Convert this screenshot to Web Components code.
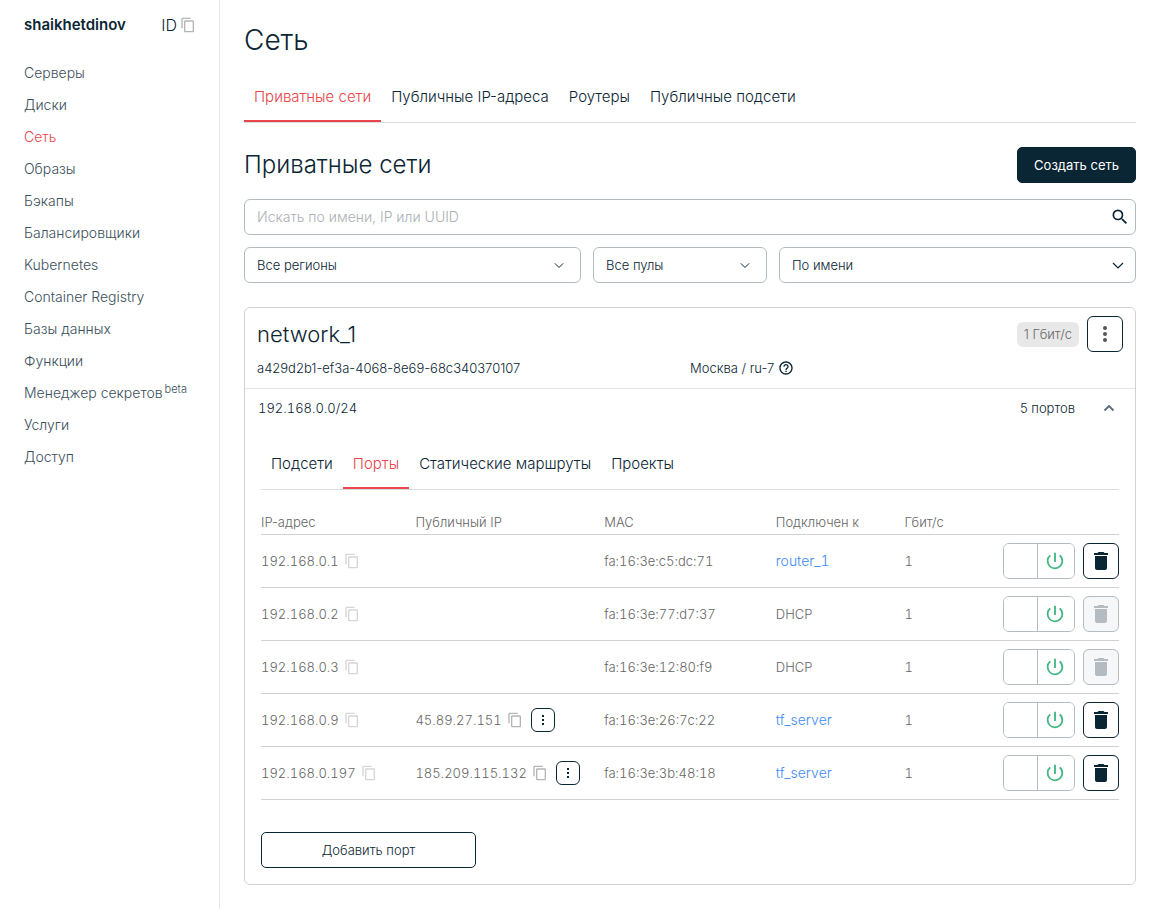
<!DOCTYPE html>
<html lang="ru">
<head>
<meta charset="utf-8">
<meta name="viewport" content="width=device-width, initial-scale=1">
<title>Сеть</title>
<style>
  :root {
    --ink: #0a2533;
    --text: #3b4f5b;
    --muted: #666;
    --red: #e8454a;
    --line: #d0d1d3;
    --field: #b4bcc2;
    --link: #3f8cf8;
    --green: #43b580;
  }
  body {
    margin: 0;
    background: #fff;
    color: var(--ink);
    font: 300 14px/20px Inter, "Liberation Sans", sans-serif;
  }
</style>
</head>
<body>
<app-shell>
  <side-nav slot="side" user="shaikhetdinov">
    <nav-link>Серверы</nav-link>
    <nav-link>Диски</nav-link>
    <nav-link active>Сеть</nav-link>
    <nav-link>Образы</nav-link>
    <nav-link>Бэкапы</nav-link>
    <nav-link>Балансировщики</nav-link>
    <nav-link>Kubernetes</nav-link>
    <nav-link>Container Registry</nav-link>
    <nav-link>Базы данных</nav-link>
    <nav-link>Функции</nav-link>
    <nav-link tag="beta">Менеджер секретов</nav-link>
    <nav-link>Услуги</nav-link>
    <nav-link>Доступ</nav-link>
  </side-nav>
  <network-page>
    <tab-bar slot="tabs" items="Приватные сети|Публичные IP-адреса|Роутеры|Публичные подсети" current="0"></tab-bar>
    <network-filters slot="filters"></network-filters>
    <network-card name="network_1" uuid="a429d2b1-ef3a-4068-8e69-68c340370107" region="Москва / ru-7" speed="1 Гбит/с" cidr="192.168.0.0/24" ports="5 портов">
      <tab-bar items="Подсети|Порты|Статические маршруты|Проекты" current="1"></tab-bar>
      <port-table></port-table>
      <ui-button kind="outline wide">Добавить порт</ui-button>
    </network-card>
  </network-page>
</app-shell>

<script>
const PATHS = {
  copy: '<path d="M16 1H4c-1.1 0-2 .9-2 2v14h2V3h12V1zm3 4H8c-1.1 0-2 .9-2 2v14c0 1.1.9 2 2 2h11c1.1 0 2-.9 2-2V7c0-1.1-.9-2-2-2zm0 16H8V7h11v14z"/>',
  search: '<path d="M15.5 14h-.79l-.28-.27A6.471 6.471 0 0 0 16 9.5 6.5 6.5 0 1 0 9.5 16c1.61 0 3.09-.59 4.23-1.57l.27.28v.79l5 4.99L20.49 19l-4.99-5zm-6 0C7.01 14 5 11.99 5 9.5S7.01 5 9.5 5 14 7.01 14 9.5 11.99 14 9.5 14z"/>',
  power: '<path d="M13 3h-2v10h2V3zm4.83 2.17l-1.42 1.42A6.92 6.92 0 0 1 19 12c0 3.87-3.13 7-7 7A6.995 6.995 0 0 1 7.58 6.58L6.17 5.17A8.932 8.932 0 0 0 3 12a9 9 0 0 0 18 0c0-2.74-1.23-5.18-3.17-6.83z"/>',
  trash: '<path d="M6 19c0 1.1.9 2 2 2h8c1.1 0 2-.9 2-2V7H6v12zM19 4h-3.5l-1-1h-5l-1 1H5v2h14V4z"/>',
  help: '<path d="M11 18h2v-2h-2v2zm1-16C6.48 2 2 6.48 2 12s4.48 10 10 10 10-4.48 10-10S17.52 2 12 2zm0 18c-4.41 0-8-3.59-8-8s3.59-8 8-8 8 3.59 8 8-3.59 8-8 8zm0-14c-2.21 0-4 1.79-4 4h2c0-1.1.9-2 2-2s2 .9 2 2c0 2-3 1.75-3 5h2c0-2.25 3-2.5 3-5 0-2.21-1.79-4-4-4z"/>',
  dots: '<circle cx="12" cy="6" r="2"/><circle cx="12" cy="12" r="2"/><circle cx="12" cy="18" r="2"/>',
  minidots: '<path d="M10.5 4.5h3v3h-3zM10.5 10.5h3v3h-3zM10.5 16.5h3v3h-3z"/>',
  down: '<path d="M7 10l5 5 5-5" fill="none" stroke="currentColor" stroke-width="1.2"/>',
  up: '<path d="M7.5 14.5L12 10l4.5 4.5" fill="none" stroke="currentColor" stroke-width="1.8"/>'
};

class BaseElement extends HTMLElement {
  connectedCallback() {
    if (this.shadowRoot) return;
    this.attachShadow({ mode: 'open' }).innerHTML =
      `<style>*{box-sizing:border-box}${this.css()}</style>${this.html()}`;
  }
  attr(name) { return this.getAttribute(name) || ''; }
  css() { return ''; }
  html() { return '<slot></slot>'; }
}
const define = (name, cls) => customElements.define(name, cls);

define('ui-icon', class extends BaseElement {
  css() {
    const size = this.attr('size') || 24;
    return `:host{display:inline-flex;flex:none;width:${size}px;height:${size}px}
      svg{width:100%;height:100%;fill:currentColor}`;
  }
  html() { return `<svg viewBox="0 0 24 24" aria-hidden="true">${PATHS[this.attr('name')]}</svg>`; }
});

define('copy-button', class extends BaseElement {
  css() {
    return `:host{display:inline-flex;flex:none;color:#b5b5b5}
      :host([faint]){color:#d6d6d6}
      button{display:flex;padding:0;border:0;background:none;color:inherit;cursor:pointer}`;
  }
  html() { return '<button type="button" aria-label="Скопировать"><ui-icon name="copy" size="16"></ui-icon></button>'; }
});

define('ui-button', class extends BaseElement {
  css() {
    return `:host{display:inline-block}
      button{font:400 13px/20px Inter,"Liberation Sans",sans-serif;height:36px;padding:0 16px;border:1px solid var(--ink);
        border-radius:5px;background:var(--ink);color:#fff;cursor:pointer;white-space:nowrap}
      .outline{background:#fff;color:var(--ink);font-weight:300}
      .wide{width:215px}`;
  }
  html() { return `<button type="button" class="${this.attr('kind')}"><slot></slot></button>`; }
});

define('icon-button', class extends BaseElement {
  css() {
    return `:host{display:inline-flex;flex:none}
      button{display:flex;align-items:center;justify-content:center;width:36px;height:36px;padding:0;
        border:1px solid var(--ink);border-radius:6px;background:#fff;color:var(--ink);cursor:pointer}
      :host([small]) button{width:24px;height:24px}
      :host([soft]) button{color:#555}
      button:disabled{border-color:var(--field);background:#f5f7f9;color:var(--field);cursor:default}`;
  }
  html() {
    const off = this.hasAttribute('disabled') ? 'disabled' : '';
    return `<button type="button" aria-label="${this.attr('label')}" ${off}>
      <ui-icon name="${this.attr('icon')}" size="${this.attr('size') || 24}"></ui-icon></button>`;
  }
});

define('power-switch', class extends BaseElement {
  css() {
    return `:host{display:inline-flex;flex:none;width:72px;height:36px;border:1px solid var(--field);border-radius:6px;overflow:hidden}
      button{display:flex;align-items:center;justify-content:center;padding:0;border:0;background:#fff;color:var(--green);cursor:pointer}
      .off{width:33px}
      .on{flex:1;padding-right:2px;border-left:1px solid var(--field)}`;
  }
  html() {
    return `<button type="button" class="off" aria-label="Выключить"></button>
      <button type="button" class="on" aria-label="Включить"><ui-icon name="power" size="22"></ui-icon></button>`;
  }
});

define('app-shell', class extends BaseElement {
  css() {
    return `:host{display:flex;align-items:stretch;min-height:100vh}
      aside{flex:none;width:220px;padding:16px 23px 16px 24px;border-right:1px solid #e5e7e9}
      main{flex:1;min-width:0;padding:24px 37px 24px 24px}`;
  }
  html() { return '<aside><slot name="side"></slot></aside><main><slot></slot></main>'; }
});

define('side-nav', class extends BaseElement {
  css() {
    return `:host{display:block}
      header{display:flex;align-items:center;justify-content:space-between;height:18px;margin-bottom:23px}
      b{font-size:15px;font-weight:600}
      .id{display:flex;align-items:center;gap:3px;font-size:16px}`;
  }
  html() {
    return `<header><b>${this.attr('user')}</b><span class="id">ID<copy-button></copy-button></span></header>
      <nav><slot></slot></nav>`;
  }
});

define('nav-link', class extends BaseElement {
  css() {
    return `:host{display:block;color:var(--text)}
      :host([active]){color:var(--red)}
      a{display:flex;align-items:center;gap:2px;height:32px;color:inherit;text-decoration:none;white-space:nowrap}
      small{font-size:11px;padding-bottom:8px}`;
  }
  html() {
    const tag = this.attr('tag');
    return `<a href="#"><slot></slot>${tag ? `<small>${tag}</small>` : ''}</a>`;
  }
});

define('tab-bar', class extends BaseElement {
  css() {
    return `:host{display:block}
      nav{display:flex;border-bottom:1px solid #d9dce0}
      a{padding:12px 10px;border-bottom:2px solid transparent;font-size:15px;line-height:22px;
        color:var(--ink);text-decoration:none;white-space:nowrap}
      a[aria-current]{color:var(--red);border-color:var(--red)}`;
  }
  html() {
    const current = Number(this.attr('current'));
    return `<nav>${this.attr('items').split('|').map((t, i) =>
      `<a href="#"${i === current ? ' aria-current="page"' : ''}>${t}</a>`).join('')}</nav>`;
  }
});

define('network-page', class extends BaseElement {
  css() {
    return `:host{display:block}
      h1{margin:0 0 18px;font-size:28px;line-height:32px;font-weight:300}
      .head{display:flex;align-items:center;justify-content:space-between;margin:24px 0 16px}
      h2{margin:0;font-size:24px;line-height:32px;font-weight:300}
      .cards{margin-top:24px}`;
  }
  html() {
    return `<h1>Сеть</h1><slot name="tabs"></slot>
      <div class="head"><h2>Приватные сети</h2><ui-button>Создать сеть</ui-button></div>
      <slot name="filters"></slot><div class="cards"><slot></slot></div>`;
  }
});

define('filter-select', class extends BaseElement {
  css() {
    return `:host{display:grid;align-items:center;min-width:0}
      select,ui-icon{grid-area:1/1}
      select{appearance:none;width:100%;height:36px;padding:0 40px 0 12px;border:1px solid var(--field);border-radius:6px;
        background:#fff;color:var(--ink);font:300 13px/20px Inter,"Liberation Sans",sans-serif}
      ui-icon{justify-self:end;margin-right:12px;pointer-events:none;color:var(--ink)}
      :host([large]) ui-icon{margin-right:6px}`;
  }
  html() {
    const size = this.hasAttribute('large') ? 24 : 20;
    return `<select aria-label="${this.attr('label')}"><option>${this.attr('value')}</option></select>
      <ui-icon name="down" size="${size}"></ui-icon>`;
  }
});

define('network-filters', class extends BaseElement {
  css() {
    return `:host{display:grid;gap:12px}
      .search{display:flex;align-items:center;height:36px;padding:0 5px 0 12px;border:1px solid var(--field);border-radius:6px}
      input{flex:1;min-width:0;padding:0;border:0;outline:0;background:none;color:var(--ink);
        font:300 14px/20px Inter,"Liberation Sans",sans-serif}
      input::placeholder{color:#a9b0b5;opacity:1}
      .row{display:grid;grid-template-columns:337fr 174fr 357fr;gap:12px}`;
  }
  html() {
    return `<label class="search"><input type="text" aria-label="Поиск" placeholder="Искать по имени, IP или UUID"><ui-icon name="search" size="20"></ui-icon></label>
      <div class="row">
        <filter-select label="Регион" value="Все регионы"></filter-select>
        <filter-select label="Пул" value="Все пулы"></filter-select>
        <filter-select label="Сортировка" value="По имени" large></filter-select>
      </div>`;
  }
});

define('network-card', class extends BaseElement {
  css() {
    return `:host{display:block;border:1px solid var(--line);border-radius:6px;font-size:13px}
      header{padding:8px 12px;border-bottom:1px solid #e3e5e6}
      .top{display:flex;align-items:center;gap:8px;margin-bottom:4px}
      h3{flex:1;margin:0;font-size:22px;line-height:28px;font-weight:300}
      .speed{padding:2px 7px 3px;border-radius:6px;background:#e8e8e8;color:#666}
      .meta{display:grid;grid-template-columns:1fr 1fr;line-height:24px}
      .region{display:flex;align-items:center;gap:4px}
      .subnet{display:flex;align-items:center;height:38px;padding:0 14px 0 13px}
      .subnet span{flex:1;font-variant-numeric:tabular-nums}
      button{display:flex;margin-left:22px;padding:0;border:0;background:none;color:#5b6b76;cursor:pointer}
      .body{padding:14px 16px 16px}
      ::slotted(ui-button){margin-top:32px;display:block}`;
  }
  html() {
    return `<header><div class="top"><h3>${this.attr('name')}</h3><span class="speed">${this.attr('speed')}</span>
        <icon-button soft icon="dots" label="Действия"></icon-button></div>
      <div class="meta"><span>${this.attr('uuid')}</span>
        <span class="region">${this.attr('region')}<ui-icon name="help" size="16"></ui-icon></span></div></header>
      <div class="subnet"><span>${this.attr('cidr')}</span>${this.attr('ports')}
        <button type="button" aria-label="Свернуть"><ui-icon name="up" size="24"></ui-icon></button></div>
      <div class="body"><slot></slot></div>`;
  }
});

const PORTS = [
  { ip: '192.168.0.1', mac: 'fa:16:3e:c5:dc:71', to: 'router_1', link: true },
  { ip: '192.168.0.2', mac: 'fa:16:3e:77:d7:37', to: 'DHCP' },
  { ip: '192.168.0.3', mac: 'fa:16:3e:12:80:f9', to: 'DHCP' },
  { ip: '192.168.0.9', pub: '45.89.27.151', mac: 'fa:16:3e:26:7c:22', to: 'tf_server', link: true },
  { ip: '192.168.0.197', pub: '185.209.115.132', mac: 'fa:16:3e:3b:48:18', to: 'tf_server', link: true }
];

define('port-table', class extends BaseElement {
  css() {
    return `:host{display:block}
      table{width:100%;table-layout:fixed;border-collapse:separate;border-spacing:0;font-size:13px;line-height:20px;color:var(--muted)}
      th,td{padding:0;border-bottom:1px solid var(--line);text-align:left;font-weight:300;white-space:nowrap}
      th{padding:22px 0 2px}
      td{height:53px;font-variant-numeric:tabular-nums}
      .w1{width:18%}.w2{width:22%}.w3{width:20%}.w4{width:15%}.w5{width:25%}
      .cell{display:flex;align-items:center;gap:5px}
      .cell icon-button{margin-left:3px}
      .last{gap:8px}
      .last span{flex:1}
      .last icon-button{margin:0}
      a{color:var(--link);font-size:14px;text-decoration:none}`;
  }
  row(p) {
    const pub = p.pub ? `<div class="cell">${p.pub}<copy-button></copy-button>
      <icon-button small icon="minidots" size="16" label="Действия с адресом"></icon-button></div>` : '';
    return `<tr><td><div class="cell">${p.ip}<copy-button faint></copy-button></div></td><td>${pub}</td>
      <td>${p.mac}</td><td>${p.link ? `<a href="#">${p.to}</a>` : p.to}</td>
      <td><div class="cell last"><span>1</span><power-switch></power-switch>
        <icon-button icon="trash" label="Удалить порт" ${p.link ? '' : 'disabled'}></icon-button></div></td></tr>`;
  }
  html() {
    return `<table><thead><tr><th class="w1">IP-адрес</th><th class="w2">Публичный IP</th><th class="w3">MAC</th>
      <th class="w4">Подключен к</th><th class="w5">Гбит/с</th></tr></thead>
      <tbody>${PORTS.map(p => this.row(p)).join('')}</tbody></table>`;
  }
});
</script>
</body>
</html>
